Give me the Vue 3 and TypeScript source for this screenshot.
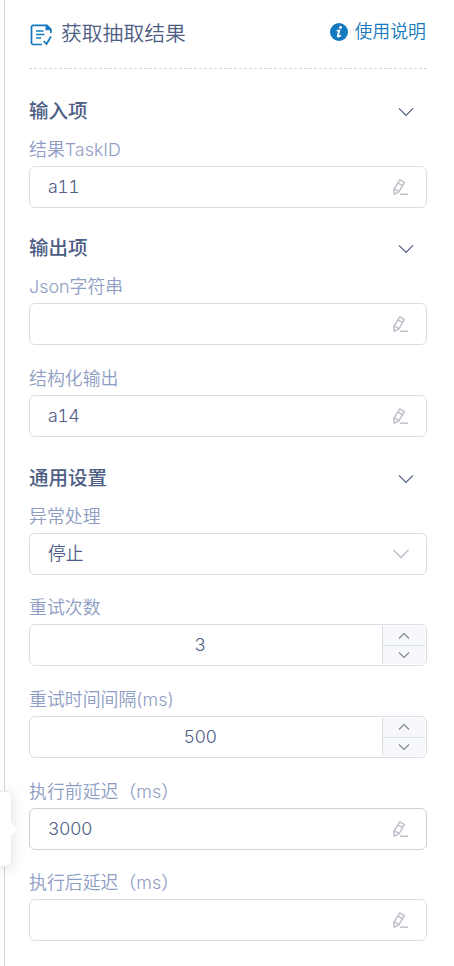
<script setup lang="ts">
import { ref } from 'vue'

type Kind = 'text' | 'select' | 'number'
interface Field { label: string; kind: Kind; value: string; active?: boolean }
interface Section { title: string; fields: Field[] }

const sections = ref<Section[]>([
  { title: '输入项', fields: [{ label: '结果TaskID', kind: 'text', value: 'a11' }] },
  {
    title: '输出项',
    fields: [
      { label: 'Json字符串', kind: 'text', value: '' },
      { label: '结构化输出', kind: 'text', value: 'a14' },
    ],
  },
  {
    title: '通用设置',
    fields: [
      { label: '异常处理', kind: 'select', value: '停止' },
      { label: '重试次数', kind: 'number', value: '3' },
      { label: '重试时间间隔(ms)', kind: 'number', value: '500' },
      { label: '执行前延迟（ms）', kind: 'text', value: '3000', active: true },
      { label: '执行后延迟（ms）', kind: 'text', value: '' },
    ],
  },
])
</script>

<template>
  <main class="panel">
    <header class="head">
      <svg class="doc" viewBox="0 0 24 24">
        <path d="M13 22.500H4.200A1.700 1.700 0 0 1 2.500 20.800V5.100A1.700 1.700 0 0 1 4.200 3.400H18L21.900 7.300V11" />
        <path d="M16.500 2.600V8.300H22.700Z" class="solid" />
        <path d="M7 9H14.500M7 12.500H15.500M7 16H12M14.700 19L17.500 22L22 14.500" />
      </svg>
      <h1>获取抽取结果</h1>
      <a class="help">
        <svg viewBox="0 0 18 18">
          <circle cx="9" cy="9" r="9" />
          <circle class="mark" cx="10.500" cy="4.500" r="1.450" />
          <path class="stem" d="M6.700 7.600H9.300L7.700 13.300Q8.500 14 10.900 12.200" />
        </svg>
        <span>使用说明</span>
      </a>
    </header>

    <section v-for="section in sections" :key="section.title">
      <div class="section-head">
        <h2>{{ section.title }}</h2>
        <svg class="fold" viewBox="0 0 16 10"><path d="M1 1.300L8 8.300L15 1.300" /></svg>
      </div>
      <div v-for="field in section.fields" :key="field.label" class="field">
        <label>{{ field.label }}</label>
        <div class="control" :class="[field.kind, { active: field.active }]">
          <span class="value">{{ field.value }}</span>
          <svg v-if="field.kind === 'text'" class="pencil" viewBox="0 0 18 18">
            <path d="M2.800 11.500L8.800 1.900L13.400 4.600L7.900 13.900L3.200 16.300ZM7 4.900L11.600 7.600M2.800 11.500Q6 11 7.900 13.900M9 16.300H17" />
          </svg>
          <svg v-else-if="field.kind === 'select'" class="caret" viewBox="0 0 18 12"><path d="M1.500 2L9 9.500L16.500 2" /></svg>
          <div v-else class="stepper">
            <div><svg viewBox="0 0 12 8"><path d="M1 6.500L6 1.500L11 6.500" /></svg></div>
            <div><svg viewBox="0 0 12 8"><path d="M1 1.500L6 6.500L11 1.500" /></svg></div>
          </div>
        </div>
      </div>
    </section>

    <aside class="flyout"></aside>
  </main>
</template>

<style>
body { background: #fff; overflow: hidden; }
</style>

<style scoped>
.panel {
  position: relative;
  box-sizing: border-box;
  height: 966px;
  margin-left: 4px;
  padding: 0 27px 0 24px;
  border-left: 1px solid #d5d5d7;
  font-family: Inter, "Noto Sans CJK SC", sans-serif;
  font-weight: 350;
  color: #4e5e84;
}
svg { display: block; flex: none; fill: none; stroke: currentColor; }
.head {
  display: flex;
  align-items: center;
  box-sizing: border-box;
  height: 69px;
  margin-bottom: 22.85px;
  border-bottom: 1px dashed #d5d6da;
}
.doc { width: 24px; height: 24px; color: #1478be; stroke-width: 1.7; }
.doc .solid { fill: currentColor; stroke: none; }
h1 { margin: 0 auto 0 8px; font-size: 20.8px; line-height: 30px; font-weight: 350; }
.help { display: flex; align-items: center; gap: 6px; height: 28px; margin: 0 1px 5px 0; font-size: 17.900px; color: #1478be; }
.help svg { width: 18px; height: 18px; fill: #1478be; stroke: none; }
.help span { height: 28px; line-height: 28px; }
.help .mark { fill: #fff; }
.help .stem { fill: none; stroke: #fff; stroke-width: 1.8; }
.section-head { display: flex; align-items: flex-start; justify-content: space-between; height: 45.950px; padding-right: 13.500px; }
h2 { margin: 0; font-size: 19.500px; line-height: 39px; font-weight: 500; }
.fold { width: 16px; height: 10px; margin-top: 15px; stroke-width: 1.2; }
.field { height: 91.650px; }
label { display: block; height: 28px; line-height: 24px; font-size: 17.900px; color: #8e9dc3; white-space: nowrap; }
.control {
  display: flex;
  align-items: center;
  box-sizing: border-box;
  height: 42px;
  padding: 0 17px 0 18px;
  border: 1px solid #dbdce6;
  border-radius: 6px;
  font-size: 17.800px;
  font-variant-numeric: tabular-nums;
}
.control.active { border-color: #d0d1dc; }
.value { flex: 1; line-height: 26px; letter-spacing: -0.5px; }
.select .value { letter-spacing: 0; }
.pencil { width: 18px; height: 18px; color: #bfc2cb; stroke-width: 1.5; stroke-linejoin: round; }
.caret { width: 18px; height: 12px; color: #c0c4ce; stroke-width: 1.6; }
.select { padding-right: 16px; }
.number { padding: 1px 1px 1px 30px; }
.number .value { padding-right: 42px; text-align: center; }
.stepper { box-sizing: border-box; width: 43px; height: 38px; border-left: 1px solid #dbdde7; border-radius: 0 5px 5px 0; background: #f5f7fb; color: #81848d; }
.stepper div { display: flex; align-items: center; justify-content: center; box-sizing: border-box; height: 19px; }
.stepper div + div { border-top: 1px solid #dbdde7; }
.stepper svg { width: 12px; height: 8px; stroke-width: 1.1; }
.flyout {
  position: absolute;
  left: -10px;
  top: 791px;
  box-sizing: border-box;
  width: 17px;
  height: 76px;
  border: 1px solid #e9ebf2;
  border-radius: 5px;
  background: #fff;
  box-shadow: 0 2px 16px rgba(0, 0, 0, 0.12);
}
.flyout::after {
  content: "";
  position: absolute;
  right: -7px;
  top: 29px;
  border: 8px solid transparent;
  border-right: 0;
  border-left: 8px solid #fff;
}
</style>
